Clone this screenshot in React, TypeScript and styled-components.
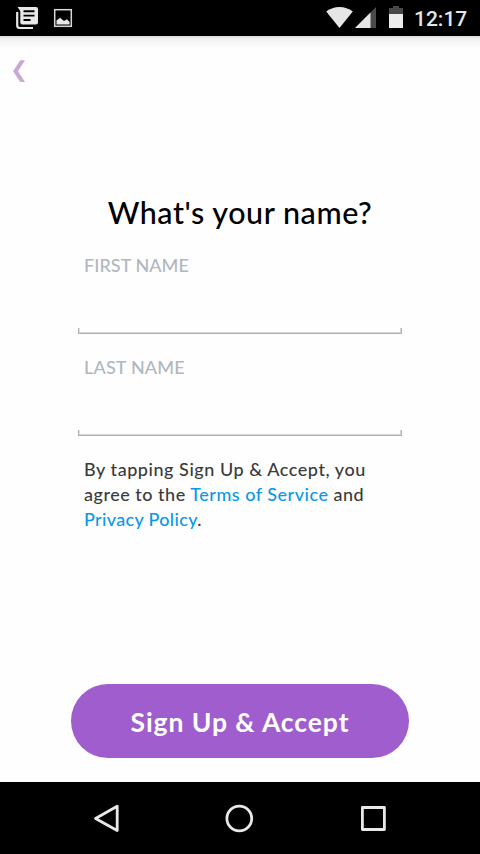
import React from 'react';
import styled, { createGlobalStyle } from 'styled-components';

const GlobalStyle = createGlobalStyle`
  * { box-sizing: border-box; }
  body { margin: 0; background: #fff; }
`;

const Screen = styled.div`
  display: flex;
  flex-direction: column;
  width: 480px;
  height: 854px;
  overflow: hidden;
  background: #fefefe;
  font-family: Lato, 'Open Sans', sans-serif;
`;

const StatusBar = styled.header`
  display: flex;
  flex: none;
  justify-content: space-between;
  height: 36px;
  background: #000;
`;

const Clock = styled.time`
  width: 70px;
  padding-left: 4px;
  color: #e6e6e6;
  font: 500 21px/38px Roboto, sans-serif;
  white-space: nowrap;
`;

const StatusGroup = styled.div`
  display: flex;
`;

const Icon = styled.svg`
  display: block;
  flex: none;
`;

const Body = styled.main`
  display: flex;
  flex: 1;
  flex-direction: column;
  align-items: center;
  background: linear-gradient(#d8d8d8 0, #ececec 2px, #f6f6f6 6px, #fefefe 14px);
`;

const TopRow = styled.div`
  align-self: stretch;
  height: 156px;
`;

const BackButton = styled.button`
  display: block;
  padding: 0;
  border: 0;
  background: none;
`;

const Title = styled.h1`
  margin: 0;
  height: 40px;
  color: #000;
  font-size: 30.5px;
  font-weight: 500;
  line-height: 40px;
  letter-spacing: 0.54px;
  white-space: nowrap;
`;

const Form = styled.form`
  width: 324px;
  padding-top: 21px;
`;

const Field = styled.label`
  display: block;
  height: 102px;
`;

const FieldName = styled.span<{ $tracking: string }>`
  display: block;
  height: 75px;
  padding-left: 6px;
  color: #b0b7bf;
  font-size: 18px;
  font-weight: 500;
  line-height: 24px;
  letter-spacing: ${(p) => p.$tracking};
`;

const Underline = styled.span`
  display: block;
  height: 6px;
  border: 1px solid #b2b2b2;
  border-top: 0;
  box-shadow: inset 0 -1px #d6d6d6, inset 1px 0 #e2e2e2, inset -1px 0 #d6d6d6;
`;

const Terms = styled.p`
  margin: 0;
  padding-left: 6px;
  height: 227px;
  color: #3a3a3a;
  font-size: 18px;
  font-weight: 500;
  line-height: 25px;
`;

const Line = styled.span<{ $tracking: string }>`
  display: block;
  white-space: nowrap;
  letter-spacing: ${(p) => p.$tracking};
`;

const Link = styled.a`
  color: #0a98e8;
`;

const SubmitButton = styled.button`
  width: 338px;
  height: 74px;
  padding: 1px 0 0;
  border: 0;
  border-radius: 37px;
  background: #a05dcd;
  color: #fff;
  font: 700 26.5px/36px Lato, sans-serif;
  letter-spacing: 0.93px;
  white-space: nowrap;
`;

const NavBar = styled.nav`
  display: flex;
  flex: none;
  height: 72px;
  background: #000;
`;

export default function App() {
  return (
    <Screen>
      <GlobalStyle />
      <StatusBar>
        <Icon width="80" height="36" viewBox="0 0 80 36">
          <path d="M17.2 12V25.5Q17.2 28 19.7 28H33" fill="none" stroke="#e8e8e8" strokeWidth="2.2" />
          <path d="M17.5 7H36Q38 7 38 9V22.6Q38 24.6 36 24.6H22.3Q20.3 24.6 20.3 22.6V11Z" fill="#e8e8e8" />
          <path d="M23.5 11.2H34.5M23.5 15.6H34.5M23.5 20H30.5" stroke="#000" strokeWidth="1.9" />
          <rect x="54.7" y="9.7" width="16.6" height="16.6" fill="none" stroke="#d8d8d8" strokeWidth="1.5" />
          <path d="M56.5 24.6V20.5L60 17.7L64 21L67 19.3L69.6 22V24.6Z" fill="#e8e8e8" />
        </Icon>
        <StatusGroup>
          <Icon width="100" height="36" viewBox="310 0 100 36">
            <path d="M339.5 28L326.2 11.5Q332 7 339.5 7T352.8 11.5Z" fill="#e6e6e6" />
            <path d="M376 7V28H355Z" fill="#4a4a4a" />
            <path d="M370.5 12.5V28H355Z" fill="#e6e6e6" />
            <path d="M389 14V8H393V6H399V8H403V14Z" fill="#484848" />
            <path d="M389 14H403V28H389Z" fill="#ececec" />
          </Icon>
          <Clock>12:17</Clock>
        </StatusGroup>
      </StatusBar>
      <Body>
        <TopRow>
          <BackButton type="button" aria-label="Back">
            <Icon width="48" height="64" viewBox="0 36 48 64">
              <path d="M20.3 60.3H25L18 71.2L25 82H20.3L13 71.2Z" fill="#cba8d3" />
            </Icon>
          </BackButton>
        </TopRow>
        <Title>What's your name?</Title>
        <Form>
          <Field>
            <FieldName $tracking="0.05px">FIRST NAME</FieldName>
            <Underline />
          </Field>
          <Field>
            <FieldName $tracking="0.18px">LAST NAME</FieldName>
            <Underline />
          </Field>
          <Terms>
            <Line $tracking="0.55px">By tapping Sign Up &amp; Accept, you</Line>
            <Line $tracking="0.51px">agree to the <Link>Terms of Service</Link> and</Line>
            <Line $tracking="0.33px"><Link>Privacy Policy</Link>.</Line>
          </Terms>
        </Form>
        <SubmitButton type="button">Sign Up &amp; Accept</SubmitButton>
      </Body>
      <NavBar>
        <Icon width="480" height="72" viewBox="0 782 480 72" fill="none" stroke="#e8e8e8" strokeWidth="2.8" strokeLinejoin="round">
          <path d="M117.2 806.2V830.5L95.5 818.5Z" />
          <circle cx="239.3" cy="818.5" r="12.4" />
          <rect x="362.4" y="807.5" width="22" height="22" />
        </Icon>
      </NavBar>
    </Screen>
  );
}
